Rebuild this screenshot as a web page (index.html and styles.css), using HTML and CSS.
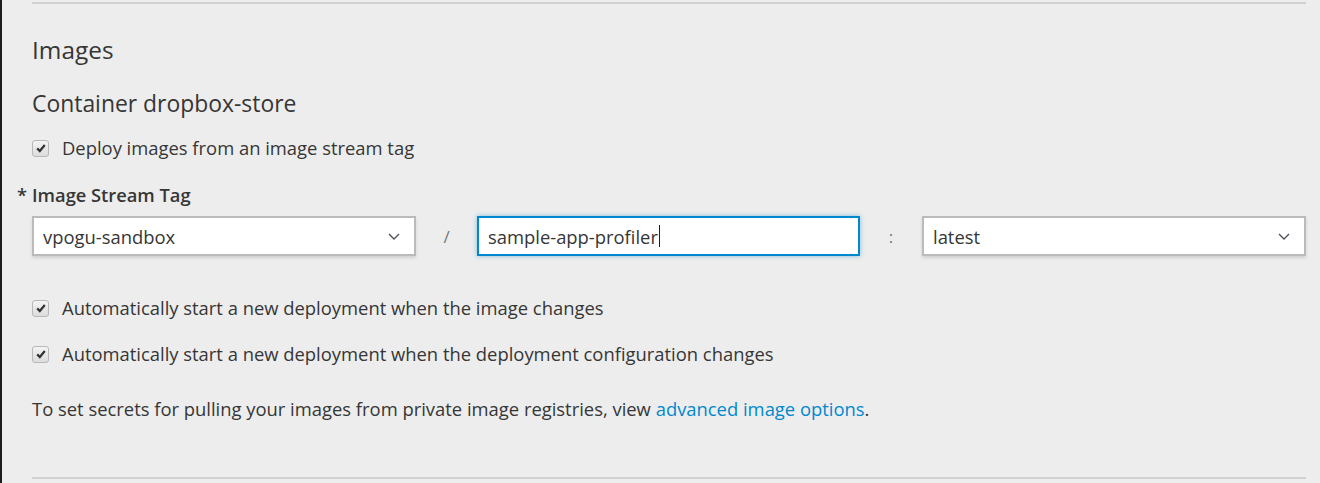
FILE: index.html
```html
<!DOCTYPE html>
<html>
<head>
<meta charset="utf-8">
<link rel="stylesheet" href="styles.css">
</head>
<body>
<div class="page">
  <div class="section">
    <h2 class="title">Images</h2>
    <h3 class="subtitle">Container dropbox-store</h3>
    <label class="check"><span class="box"><svg viewBox="0 0 12 12" width="12" height="12"><path d="M2.2 6.4 L4.8 9 L9.8 3" fill="none" stroke="#333" stroke-width="2.2"/></svg></span>Deploy images from an image stream tag</label>
    <div class="field">
      <div class="label"><span class="req">*</span>Image Stream Tag</div>
      <div class="row">
        <div class="select"><span>vpogu-sandbox</span><svg class="chev" viewBox="0 0 12 7" width="12" height="7"><path d="M1 1 L6 6 L11 1" fill="none" stroke="#4d5258" stroke-width="1.4"/></svg></div>
        <div class="sep">/</div>
        <div class="input"><span>sample-app-profiler</span><span class="caret"></span></div>
        <div class="sep">:</div>
        <div class="select"><span>latest</span><svg class="chev" viewBox="0 0 12 7" width="12" height="7"><path d="M1 1 L6 6 L11 1" fill="none" stroke="#4d5258" stroke-width="1.4"/></svg></div>
      </div>
    </div>
    <label class="check first"><span class="box"><svg viewBox="0 0 12 12" width="12" height="12"><path d="M2.2 6.4 L4.8 9 L9.8 3" fill="none" stroke="#333" stroke-width="2.2"/></svg></span>Automatically start a new deployment when the image changes</label>
    <label class="check"><span class="box"><svg viewBox="0 0 12 12" width="12" height="12"><path d="M2.2 6.4 L4.8 9 L9.8 3" fill="none" stroke="#333" stroke-width="2.2"/></svg></span>Automatically start a new deployment when the deployment configuration changes</label>
    <p class="note">To set secrets for pulling your images from private image registries, view <a href="#">advanced image options</a>.</p>
  </div>
</div>
</body>
</html>
```
FILE: styles.css
```css
html, body {
  margin: 0;
  padding: 0;
  background: #ededed;
}
body {
  font-family: "Open Sans", "Noto Sans", sans-serif;
  color: #363636;
  height: 483px;
  overflow: hidden;
}
.page {
  border-left: 2px solid #1c1c1c;
  height: 483px;
  box-sizing: border-box;
  padding: 2px 14px 0 30px;
}
.section {
  border-top: 2px solid #d1d1d1;
  border-bottom: 2px solid #d1d1d1;
  height: 477px;
  box-sizing: border-box;
}
.title {
  margin: 0;
  padding-top: 31px;
  font-size: 24.4px;
  font-weight: 400;
  line-height: 30px;
}
.subtitle {
  margin: 0;
  padding-top: 24px;
  font-size: 22.9px;
  font-weight: 400;
  line-height: 30px;
}
.check {
  display: flex;
  align-items: center;
  font-size: 18.4px;
  line-height: 26px;
  margin-top: 16px;
}
.check.first { margin-top: 39px; }
.check + .check { margin-top: 20px; }
.box {
  width: 15px;
  height: 15px;
  border: 1px solid #b8b8b8;
  border-radius: 3px;
  background: linear-gradient(#f4f4f4, #dcdcdc);
  display: flex;
  align-items: center;
  justify-content: center;
  margin-right: 13px;
  box-sizing: content-box;
}
.field { margin-top: 21px; }
.label {
  font-size: 18.3px;
  font-weight: 600;
  line-height: 26px;
  position: relative;
}
.req {
  position: absolute;
  left: -15px;
  top: 0;
  font-weight: 600;
}
.row {
  display: flex;
  align-items: center;
  margin-top: 8px;
}
.select, .input {
  width: 384px;
  height: 40px;
  flex: none;
  box-sizing: border-box;
  background: #fff;
  display: flex;
  align-items: center;
  padding: 0 9px;
  font-size: 18.4px;
}
.select {
  border: 2px solid #bbb;
  justify-content: space-between;
  padding-right: 14px;
  box-shadow: 0 2px 3px rgba(0,0,0,0.12);
}
.input {
  width: 383px;
  border: 2px solid #0088ce;
  box-shadow: 0 0 5px rgba(0,136,206,0.45);
}
.caret {
  display: inline-block;
  width: 1px;
  height: 22px;
  background: #222;
  margin-left: 1px;
}
.sep {
  width: 61px;
  flex: none;
  text-align: center;
  color: #777;
  font-size: 17px;
}
.sep:nth-child(4) { width: 62px; }
.chev { display: block; }
.note {
  margin: 29px 0 0;
  font-size: 18.4px;
  line-height: 26px;
}
.note a {
  color: #0088ce;
  text-decoration: none;
}
```
